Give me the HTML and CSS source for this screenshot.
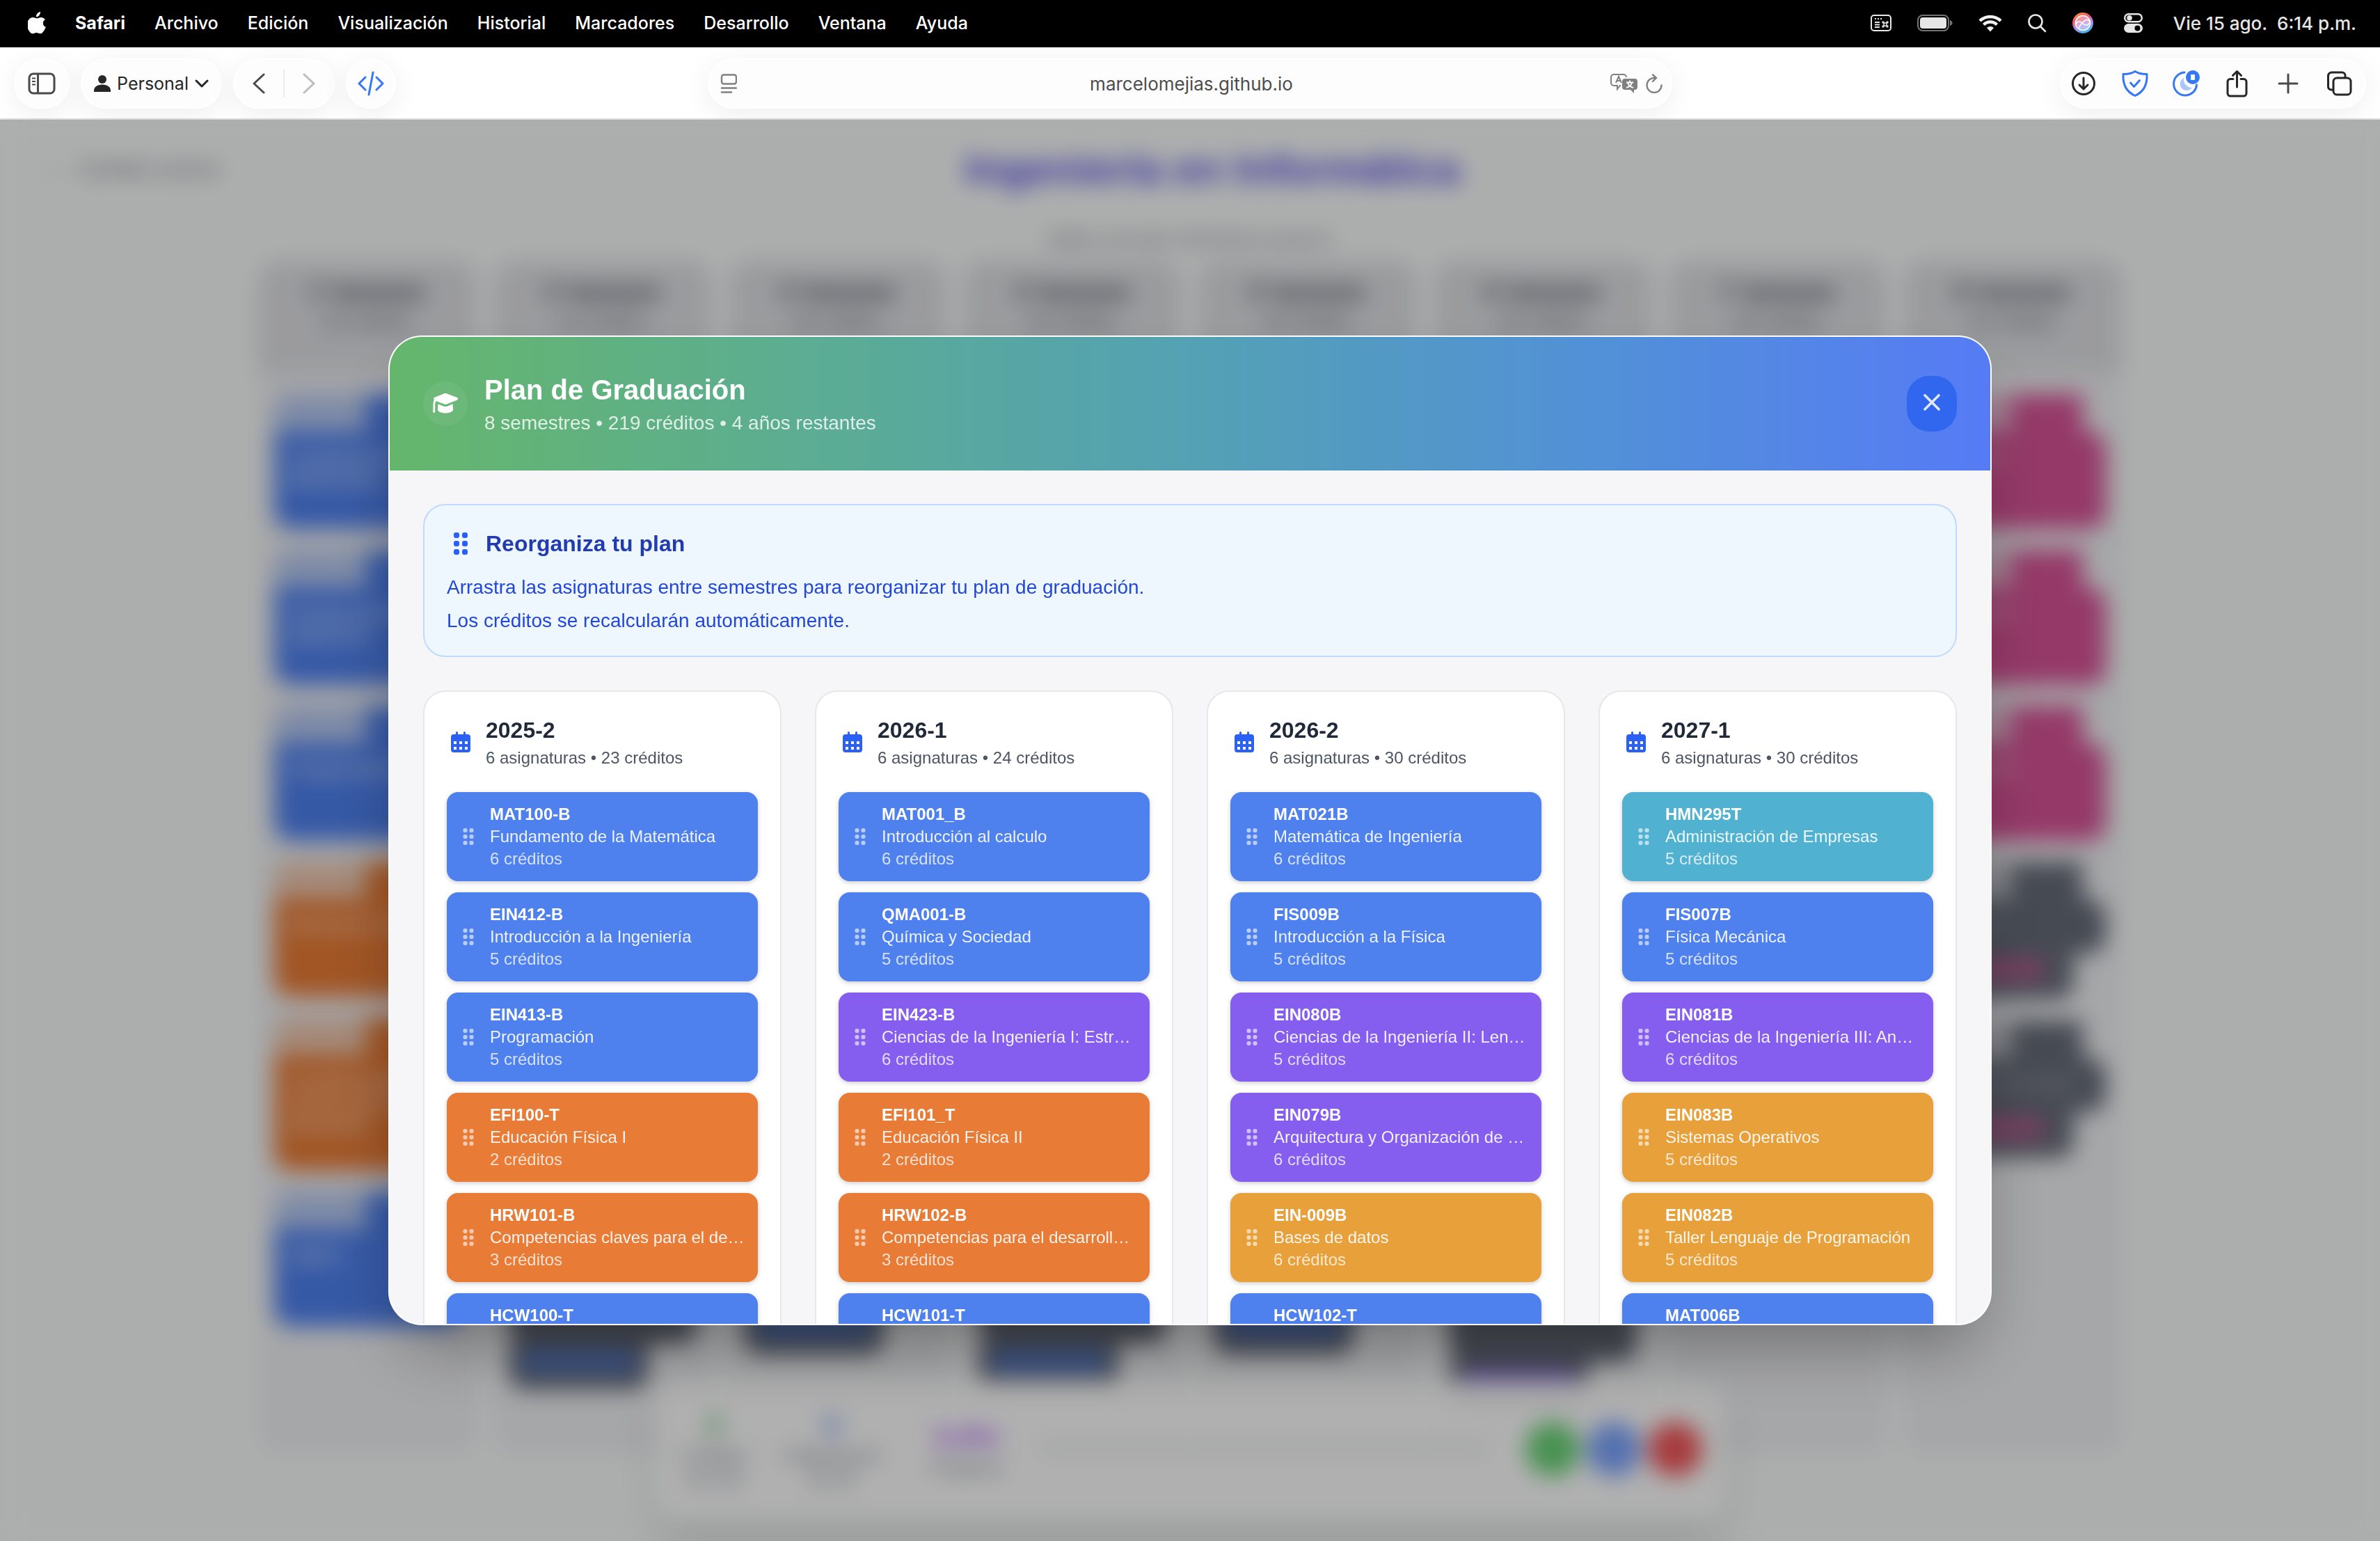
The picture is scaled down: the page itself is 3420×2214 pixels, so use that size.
FILE: index.html
```html
<!DOCTYPE html>
<html lang="es">
<head>
<meta charset="utf-8">
<title>Ingeniería en Informática</title>
<link rel="stylesheet" href="styles.css">
</head>
<body>
<svg class="sprite" aria-hidden="true">
  <symbol id="grip" viewBox="0 0 20 32">
    <rect x="0" y="0" width="8" height="8" rx="3"/><rect x="12" y="0" width="8" height="8" rx="3"/>
    <rect x="0" y="12" width="8" height="8" rx="3"/><rect x="12" y="12" width="8" height="8" rx="3"/>
    <rect x="0" y="24" width="8" height="8" rx="3"/><rect x="12" y="24" width="8" height="8" rx="3"/>
  </symbol>
  <symbol id="calendar" viewBox="0 0 28 30">
    <path fill-rule="evenodd" d="M7 1.500a1.500 1.500 0 0 1 3 0V4h8V1.500a1.500 1.500 0 0 1 3 0V4h3a4 4 0 0 1 4 4v18a4 4 0 0 1-4 4H4a4 4 0 0 1-4-4V8a4 4 0 0 1 4-4h3zM4 14v4h4v-4zm8 0v4h4v-4zm8 0v4h4v-4zM4 22v4h4v-4zm8 0v4h4v-4zm8 0v4h4v-4z"/>
  </symbol>
</svg>

<header class="menubar">
  <nav class="menus">
    <svg class="apple" viewBox="0 0 26 32"><path fill="#fff" d="M18 0c.2 2-.6 3.900-1.700 5.200C15.200 6.500 13.600 7.400 12 7.300c-.2-1.900.7-3.800 1.700-5C14.800 1 16.600.1 18 0zM24.800 11.200c-2 1.200-3 2.900-3 5 0 2.500 1.500 4.700 4 5.600-.6 1.800-1.500 3.500-2.600 5.100-1.500 2.200-3 4.300-5.300 4.300-2.300 0-2.900-1.300-5.500-1.300s-3.400 1.300-5.500 1.400c-2.300.1-4-2.300-5.500-4.400C-1.300 22.700-1.800 15.900.8 12 2.400 9.500 4.900 8.100 7.300 8.100c2.400 0 3.900 1.300 5.900 1.300 1.900 0 3.100-1.300 5.900-1.300 2.200 0 4.300 1.100 5.700 3.100z"/></svg>
    <b>Safari</b><span>Archivo</span><span>Edición</span><span>Visualización</span><span>Historial</span><span>Marcadores</span><span>Desarrollo</span><span>Ventana</span><span>Ayuda</span>
  </nav>
  <div class="status">
    <svg width="30" height="24" viewBox="0 0 30 24" fill="none" stroke="#e6e6e6" stroke-width="2"><rect x="1" y="1" width="28" height="22" rx="4"/><path d="M6 6h2m2 0h2m2 0h2M6 11h7M6 14.500h7M6 18h7"/><path stroke-width="1.500" d="M19 12h4v4h-4zM19 12h-1a1 1 0 1 1 1-1zM23 12v-1a1 1 0 1 1 1 1zM23 16h1a1 1 0 1 1-1 1zM19 16v1a1 1 0 1 1-1-1z"/></svg>
    <svg width="51" height="24" viewBox="0 0 51 24"><rect x="1" y="1" width="44" height="22" rx="7" fill="none" stroke="#737373" stroke-width="2"/><rect x="4" y="4" width="38" height="16" rx="4" fill="#e6e6e6"/><path fill="#737373" d="M47 8c2 .5 3.500 2 3.500 4S49 15.500 47 16z"/></svg>
    <svg width="34" height="26" viewBox="0 0 34 26" fill="none" stroke="#f0f0f0" stroke-width="4.500"><path d="M2 10a21.500 21.500 0 0 1 30 0"/><path d="M7.500 15.500a13.500 13.500 0 0 1 19 0"/><path fill="#f0f0f0" stroke="none" d="M17 25.500l-5-5.500a7 7 0 0 1 10 0z"/></svg>
    <svg width="27" height="28" viewBox="0 0 27 28" fill="none" stroke="#e6e6e6" stroke-width="2.600" stroke-linecap="round"><circle cx="11" cy="12" r="9.500"/><path d="M18 19l7 7"/></svg>
    <svg class="siri" width="30" height="30" viewBox="0 0 30 30"><defs><linearGradient id="siri" x1=".2" y1="0" x2=".6" y2="1"><stop offset="0" stop-color="#f7893b"/><stop offset=".35" stop-color="#ee5a78"/><stop offset=".6" stop-color="#b58be8"/><stop offset="1" stop-color="#38b9f2"/></linearGradient></defs><circle cx="15" cy="15" r="15" fill="url(#siri)"/><circle cx="15" cy="15" r="10" fill="#fff" fill-opacity=".35"/><g fill="none" stroke="#fff" stroke-width="1.600"><circle cx="15" cy="15" r="10.500"/><path d="M5 17c2-5 6-5 9.500-1.500S22 20 25 14M10 22c0-4 3-6 6-9s6-3 8-1"/></g></svg>
    <svg width="27" height="28" viewBox="0 0 27 28"><rect x="1.200" y="1.200" width="24.600" height="11" rx="5.500" fill="none" stroke="#e6e6e6" stroke-width="2.400"/><circle cx="8" cy="6.700" r="3.800" fill="#e6e6e6"/><rect x="0" y="15" width="27" height="13" rx="6.500" fill="#e6e6e6"/><circle cx="19.500" cy="21.500" r="4" fill="#000"/></svg>
    <time class="clock">Vie 15 ago.&nbsp; 6:14 p.m.</time>
  </div>
</header>

<div class="toolbar">
  <div class="tools">
    <button class="pill pill--side" aria-label="Barra lateral"><svg width="40" height="32" viewBox="0 0 40 32" fill="none" stroke="#4a4a4a" stroke-width="3"><rect x="2" y="2" width="36" height="28" rx="6"/><path d="M14.500 2v28"/><path stroke-width="2" d="M6 8.500h5M6 13h5M6 17.500h5"/></svg></button>
    <button class="pill pill--profile"><svg width="24" height="24" viewBox="0 0 24 24" fill="#262626"><circle cx="12" cy="6" r="6"/><path d="M0 24v-2c0-5 5-8.500 12-8.500S24 17 24 22v2z"/></svg>Personal<svg width="20" height="12" viewBox="0 0 20 12" fill="none" stroke="#262626" stroke-width="3" stroke-linecap="round" stroke-linejoin="round"><path d="M2 2l8 8 8-8"/></svg></button>
    <div class="pill pill--nav">
      <button aria-label="Atrás"><svg width="18" height="30" viewBox="0 0 18 30" fill="none" stroke="#4a4a4a" stroke-width="3" stroke-linecap="round" stroke-linejoin="round"><path d="M16 2L2 15l14 13"/></svg></button>
      <button aria-label="Adelante"><svg width="18" height="30" viewBox="0 0 18 30" fill="none" stroke="#bcbcbc" stroke-width="3" stroke-linecap="round" stroke-linejoin="round"><path d="M2 2l14 13L2 28"/></svg></button>
    </div>
    <button class="pill pill--code" aria-label="Inspector"><svg width="38" height="36" viewBox="0 0 38 36" fill="none" stroke="#3478f6" stroke-width="3" stroke-linecap="round" stroke-linejoin="round"><path d="M11 9L2 18l9 9M27 9l9 9-9 9M22 2l-6 32"/></svg></button>
  </div>
  <div class="pill address">
    <svg width="24" height="28" viewBox="0 0 24 28" fill="none" stroke="#808080" stroke-width="2.400" stroke-linecap="round"><rect x="2" y="1.500" width="21" height="13" rx="3"/><path d="M2 20.500h21M2 26.500h14"/></svg>
    <input class="url" type="text" aria-label="Dirección" value="marcelomejias.github.io">
    <div class="address-end">
      <svg width="40" height="28" viewBox="0 0 40 28" fill="none" stroke="#808080" stroke-width="2"><path d="M15 17h-1l-4 5v-5H5a4 4 0 0 1-4-4V5a4 4 0 0 1 4-4h14a4 4 0 0 1 4 4"/><path d="M8 13l4-9 4 9M9.500 10h5"/><path fill="#808080" stroke="none" d="M21 7h14a4 4 0 0 1 4 4v8a4 4 0 0 1-4 4h-1v5l-5-5h-8a4 4 0 0 1-4-4v-8a4 4 0 0 1 4-4z"/><path stroke="#fff" stroke-width="1.800" d="M28 9.500v3M23 12.500h10M25 12.500c1 4 4 6.500 8 7.500M31 12.500c-1 4-4 6.500-8 7.500"/></svg>
      <svg width="24" height="28" viewBox="0 0 24 28" fill="none" stroke="#808080" stroke-width="2.400" stroke-linecap="round" stroke-linejoin="round"><path d="M13 6a10.500 10.500 0 1 0 9.500 10.500M10 1.500L15 6l-5 5"/></svg>
    </div>
  </div>
  <div class="pill actions">
    <button aria-label="Descargas"><svg viewBox="0 0 40 40" fill="none" stroke="#262626" stroke-width="3" stroke-linecap="round" stroke-linejoin="round"><circle cx="20" cy="20" r="15.500"/><path d="M20 12v15.500M14 22l6 6 6-6"/></svg></button>
    <button aria-label="Bloqueador"><svg viewBox="0 0 40 40" fill="none" stroke="#3478f6" stroke-width="3" stroke-linecap="round" stroke-linejoin="round"><path d="M20 2.500c5 3.200 11 4.200 17 4 .8 14-3.500 25-17 31C6.500 31.500 2.200 20.500 3 6.500c6 .2 12-.8 17-4z"/><path d="M13.500 19l5 5.500 8-9"/></svg></button>
    <button aria-label="Modo oscuro"><svg viewBox="0 0 40 40" fill="none"><path stroke="#3478f6" stroke-width="3" stroke-linecap="round" d="M18 4A16.500 16.500 0 1 0 35.500 22"/><path fill="#a9c7fb" d="M17 12a9.500 9.500 0 1 0 12 14 12 12 0 0 1-12-14z"/><circle cx="30" cy="11" r="10" fill="#3478f6"/><rect x="27" y="7" width="6" height="8" rx="1" fill="#fff"/></svg></button>
    <button aria-label="Compartir"><svg viewBox="0 0 40 40" fill="none" stroke="#262626" stroke-width="3" stroke-linecap="round" stroke-linejoin="round"><path d="M14 13.500H10a4 4 0 0 0-4 4V34a4 4 0 0 0 4 4h19a4 4 0 0 0 4-4V17.500a4 4 0 0 0-4-4h-4M19.500 25V3M13.500 8.500l6-6 6 6"/></svg></button>
    <button aria-label="Nueva pestaña"><svg viewBox="0 0 40 40" fill="none" stroke="#4a4a4a" stroke-width="3" stroke-linecap="round"><path d="M20 7v26M7 20h26"/></svg></button>
    <button aria-label="Pestañas"><svg viewBox="0 0 40 40" fill="none" stroke="#262626" stroke-width="3"><rect x="11" y="12" width="25" height="24" rx="5"/><path d="M11 29H8a4.500 4.500 0 0 1-4.500-4.500V9A5 5 0 0 1 8.500 4h15A4.500 4.500 0 0 1 28 8.500V12"/></svg></button>
  </div>
</div>

<div class="viewport">
  <main class="page">
    <div class="page-head">
      <a class="back" href="#"><span>←</span>Cambiar carrera</a>
      <h1>Ingeniería en Informática</h1>
    </div>
    <p class="hint">Malla curricular interactiva avances</p>
    <div class="malla">
      <section class="col"><header><h2>1° Semestre</h2><p>25 créditos</p></header>
        <article class="mat blue"><div class="tag"><b></b><i></i></div><p>Fundamento de la Matemática</p></article>
        <article class="mat blue"><div class="tag"><b></b><i></i></div><p>Introducción a la Ingeniería</p></article>
        <article class="mat blue"><div class="tag"><b></b><i></i></div><p>Programación</p></article>
        <article class="mat orange"><div class="tag"><b></b><i></i></div><p>Educación Física I</p></article>
        <article class="mat orange mat--tall"><div class="tag"><b></b><i></i></div><p>Competencias claves para el desarrollo</p></article>
        <article class="mat blue"><div class="tag"><b></b><i></i></div><p>Inglés I</p></article>
      </section>
      <section class="col"><header><h2>2° Semestre</h2><p>24 créditos</p></header>
        <article class="mat lock"><div class="tag"><b></b><i></i></div><p></p></article>
        <article class="mat blue"><div class="tag"><b></b><i></i></div><p></p></article>
        <article class="mat lock"><div class="tag"><b></b><i></i></div><p></p></article>
        <article class="mat lock"><div class="tag"><b></b><i></i></div><p></p></article>
        <article class="mat lock"><div class="tag"><b></b><i></i></div><p></p></article>
        <article class="mat lock mat--deep"><div class="tag"><b></b><i></i></div><p></p><footer><span class="blue"></span></footer></article>
      </section>
      <section class="col"><header><h2>3° Semestre</h2><p>30 créditos</p></header>
        <article class="mat lock"><div class="tag"><b></b><i></i></div><p></p></article>
        <article class="mat lock"><div class="tag"><b></b><i></i></div><p></p></article>
        <article class="mat lock"><div class="tag"><b></b><i></i></div><p></p></article>
        <article class="mat lock"><div class="tag"><b></b><i></i></div><p></p></article>
        <article class="mat lock"><div class="tag"><b></b><i></i></div><p></p></article>
        <article class="mat lock"><div class="tag"><b></b><i></i></div><p></p><footer><span class="blue"></span></footer></article>
      </section>
      <section class="col"><header><h2>4° Semestre</h2><p>30 créditos</p></header>
        <article class="mat lock"><div class="tag"><b></b><i></i></div><p></p></article>
        <article class="mat lock"><div class="tag"><b></b><i></i></div><p></p></article>
        <article class="mat lock"><div class="tag"><b></b><i></i></div><p></p></article>
        <article class="mat lock"><div class="tag"><b></b><i></i></div><p></p></article>
        <article class="mat lock"><div class="tag"><b></b><i></i></div><p></p></article>
        <article class="mat lock mat--deep"><div class="tag"><b></b><i></i></div><p></p><footer><span class="blue"></span></footer></article>
      </section>
      <section class="col"><header><h2>5° Semestre</h2><p>30 créditos</p></header>
        <article class="mat lock"><div class="tag"><b></b><i></i></div><p></p></article>
        <article class="mat lock"><div class="tag"><b></b><i></i></div><p></p></article>
        <article class="mat lock"><div class="tag"><b></b><i></i></div><p></p></article>
        <article class="mat lock"><div class="tag"><b></b><i></i></div><p></p></article>
        <article class="mat lock"><div class="tag"><b></b><i></i></div><p></p></article>
        <article class="mat lock"><div class="tag"><b></b><i></i></div><p></p><footer><span class="blue"></span></footer></article>
      </section>
      <section class="col"><header><h2>6° Semestre</h2><p>30 créditos</p></header>
        <article class="mat lock"><div class="tag"><b></b><i></i></div><p></p></article>
        <article class="mat lock"><div class="tag"><b></b><i></i></div><p></p></article>
        <article class="mat lock"><div class="tag"><b></b><i></i></div><p></p></article>
        <article class="mat lock"><div class="tag"><b></b><i></i></div><p></p></article>
        <article class="mat lock mat--tall"><div class="tag"><b></b><i></i></div><p></p></article>
        <article class="mat lock mat--deep"><div class="tag"><b></b><i></i></div><p></p><footer><span class="purple"></span></footer></article>
      </section>
      <section class="col"><header><h2>7° Semestre</h2><p>30 créditos</p></header>
        <article class="mat pink"><div class="tag"><b></b><i></i></div><p></p></article>
        <article class="mat pink"><div class="tag"><b></b><i></i></div><p></p></article>
        <article class="mat lock"><div class="tag"><b></b><i></i></div><p></p></article>
        <article class="mat lock"><div class="tag"><b></b><i></i></div><p></p></article>
      </section>
      <section class="col"><header><h2>8° Semestre</h2><p>30 créditos</p></header>
        <article class="mat pink"><div class="tag"><b></b><i></i></div><p>Electivo I</p></article>
        <article class="mat pink"><div class="tag"><b></b><i></i></div><p>Electivo II</p></article>
        <article class="mat pink"><div class="tag"><b></b><i></i></div><p>Electivo III</p></article>
        <article class="mat lock mat--short"><div class="tag"><b></b><i></i></div><p>Proyecto</p><footer><span class="pink"></span></footer></article>
        <article class="mat lock mat--short"><div class="tag"><b></b><i></i></div><p>Proyecto de título</p><footer><span class="pink"></span></footer></article>
      </section>
    </div>
    <aside class="dock">
      <div class="stat green"><b>0</b><span>Créditos</span><span>de 219</span></div>
      <div class="stat indigo"><b>0</b><span>Asignaturas</span><span>de 48</span></div>
      <div class="stat violet"><b>0.0%</b><span>Progreso</span></div>
      <div class="track"></div>
      <div class="dots"><i></i><i></i><i></i></div>
    </aside>
  </main>

  <div class="overlay">
    <section class="modal" role="dialog" aria-labelledby="plan-title">
      <header class="modal-head">
        <span class="cap"><svg width="36" height="30" viewBox="0 0 36 30" fill="#fff"><path d="M18 0c.7 0 1.300.1 2 .4l14.500 5.700c2 .8 2 3 0 3.800L20 15.600c-1.300.5-2.700.5-4 0L5 11.200c-1.200 1-1.800 2.500-1.800 4.300V26c0 1-.3 2-1.600 2S0 27.300.2 26L.6 14c.1-2 .7-3.400 1.500-4.400C.9 8.600 1 6.900 2.400 6.100L16 .4c.7-.3 1.300-.4 2-.4z"/><path d="M7.500 15.500l7.300 3c2 .8 4.400.8 6.400 0l7.300-3 .7 8.500c-1.500 3-6 4.500-11.200 4.500S8.300 27 6.800 24z"/></svg></span>
        <div class="modal-title"><h2 id="plan-title">Plan de Graduación</h2><p>8 semestres • 219 créditos • 4 años restantes</p></div>
        <button class="close" aria-label="Cerrar"><svg width="24" height="24" viewBox="0 0 24 24" stroke="#fff" stroke-opacity=".85" stroke-width="3.600" stroke-linecap="round"><path d="M2 2l20 20M22 2L2 22"/></svg></button>
      </header>
      <div class="modal-body">
        <div class="info">
          <h3><svg class="icon"><use href="#grip"/></svg>Reorganiza tu plan</h3>
          <p>Arrastra las asignaturas entre semestres para reorganizar tu plan de graduación.<br>Los créditos se recalcularán automáticamente.</p>
        </div>
        <div class="semesters">
          <section class="semester">
            <header><svg class="icon"><use href="#calendar"/></svg><div><h3>2025-2</h3><p>6 asignaturas • 23 créditos</p></div></header>
            <ul>
              <li class="course blue"><svg><use href="#grip"/></svg><div><b>MAT100-B</b><span>Fundamento de la Matemática</span><small>6 créditos</small></div></li>
              <li class="course blue"><svg><use href="#grip"/></svg><div><b>EIN412-B</b><span>Introducción a la Ingeniería</span><small>5 créditos</small></div></li>
              <li class="course blue"><svg><use href="#grip"/></svg><div><b>EIN413-B</b><span>Programación</span><small>5 créditos</small></div></li>
              <li class="course orange"><svg><use href="#grip"/></svg><div><b>EFI100-T</b><span>Educación Física I</span><small>2 créditos</small></div></li>
              <li class="course orange"><svg><use href="#grip"/></svg><div><b>HRW101-B</b><span>Competencias claves para el desarrollo</span><small>3 créditos</small></div></li>
              <li class="course blue"><svg><use href="#grip"/></svg><div><b>HCW100-T</b><span>Inglés I</span><small>2 créditos</small></div></li>
            </ul>
          </section>
          <section class="semester">
            <header><svg class="icon"><use href="#calendar"/></svg><div><h3>2026-1</h3><p>6 asignaturas • 24 créditos</p></div></header>
            <ul>
              <li class="course blue"><svg><use href="#grip"/></svg><div><b>MAT001_B</b><span>Introducción al calculo</span><small>6 créditos</small></div></li>
              <li class="course blue"><svg><use href="#grip"/></svg><div><b>QMA001-B</b><span>Química y Sociedad</span><small>5 créditos</small></div></li>
              <li class="course purple"><svg><use href="#grip"/></svg><div><b>EIN423-B</b><span>Ciencias de la Ingeniería I: Estructuras de Datos</span><small>6 créditos</small></div></li>
              <li class="course orange"><svg><use href="#grip"/></svg><div><b>EFI101_T</b><span>Educación Física II</span><small>2 créditos</small></div></li>
              <li class="course orange"><svg><use href="#grip"/></svg><div><b>HRW102-B</b><span>Competencias para el desarrollo profesional</span><small>3 créditos</small></div></li>
              <li class="course blue"><svg><use href="#grip"/></svg><div><b>HCW101-T</b><span>Inglés II</span><small>2 créditos</small></div></li>
            </ul>
          </section>
          <section class="semester">
            <header><svg class="icon"><use href="#calendar"/></svg><div><h3>2026-2</h3><p>6 asignaturas • 30 créditos</p></div></header>
            <ul>
              <li class="course blue"><svg><use href="#grip"/></svg><div><b>MAT021B</b><span>Matemática de Ingeniería</span><small>6 créditos</small></div></li>
              <li class="course blue"><svg><use href="#grip"/></svg><div><b>FIS009B</b><span>Introducción a la Física</span><small>5 créditos</small></div></li>
              <li class="course purple"><svg><use href="#grip"/></svg><div><b>EIN080B</b><span>Ciencias de la Ingeniería II: Lenguajes</span><small>5 créditos</small></div></li>
              <li class="course purple"><svg><use href="#grip"/></svg><div><b>EIN079B</b><span>Arquitectura y Organización de Computadores</span><small>6 créditos</small></div></li>
              <li class="course amber"><svg><use href="#grip"/></svg><div><b>EIN-009B</b><span>Bases de datos</span><small>6 créditos</small></div></li>
              <li class="course blue"><svg><use href="#grip"/></svg><div><b>HCW102-T</b><span>Inglés III</span><small>2 créditos</small></div></li>
            </ul>
          </section>
          <section class="semester">
            <header><svg class="icon"><use href="#calendar"/></svg><div><h3>2027-1</h3><p>6 asignaturas • 30 créditos</p></div></header>
            <ul>
              <li class="course teal"><svg><use href="#grip"/></svg><div><b>HMN295T</b><span>Administración de Empresas</span><small>5 créditos</small></div></li>
              <li class="course blue"><svg><use href="#grip"/></svg><div><b>FIS007B</b><span>Física Mecánica</span><small>5 créditos</small></div></li>
              <li class="course purple"><svg><use href="#grip"/></svg><div><b>EIN081B</b><span>Ciencias de la Ingeniería III: Análisis</span><small>6 créditos</small></div></li>
              <li class="course amber"><svg><use href="#grip"/></svg><div><b>EIN083B</b><span>Sistemas Operativos</span><small>5 créditos</small></div></li>
              <li class="course amber"><svg><use href="#grip"/></svg><div><b>EIN082B</b><span>Taller Lenguaje de Programación</span><small>5 créditos</small></div></li>
              <li class="course blue"><svg><use href="#grip"/></svg><div><b>MAT006B</b><span>Estadística</span><small>4 créditos</small></div></li>
            </ul>
          </section>
        </div>
      </div>
    </section>
  </div>
</div>
</body>
</html>
```
FILE: styles.css
```css
* { box-sizing: border-box; }

html, body { height: 100%; }

body {
  margin: 0;
  display: flex;
  flex-direction: column;
  overflow: hidden;
  background: #fff;
  font-family: "Liberation Sans", Arial, sans-serif;
  font-size: 24px;
}

h1, h2, h3, p, ul { margin: 0; padding: 0; }
ul { list-style: none; }
svg { display: block; flex: none; }
button { border: 0; padding: 0; background: none; font: inherit; color: inherit; }
.sprite { display: none; }

.blue { background: #4e80ee; }
.orange { background: #e87b35; }
.purple { background: #855eef; }
.amber { background: #e7a03a; }
.teal { background: #51b1d0; }
.pink { background: #d65396; }

/* System menu bar */
.menubar {
  flex: none;
  height: 68px;
  padding: 0 34px 2px 40px;
  display: flex;
  align-items: center;
  justify-content: space-between;
  background: #000;
  color: #fff;
  font-family: Inter, sans-serif;
  font-size: 25px;
  font-weight: 500;
}
.menus { display: flex; align-items: center; gap: 42px; }
.menus b { font-weight: 700; }
.apple { width: 26px; height: 32px; }
.status { display: flex; align-items: center; gap: 37px; }
.siri { margin-right: 7px; }
.clock { margin-left: 7px; color: #e6e6e6; font-size: 26px; white-space: nowrap; }

/* Browser toolbar */
.toolbar {
  flex: none;
  height: 104px;
  padding: 2px 20px 0;
  display: grid;
  grid-template-columns: 1fr minmax(0, 1386px) 1fr;
  align-items: center;
  background: #fff;
  border-bottom: 2px solid #dcdedd;
  font-family: Inter, sans-serif;
  font-size: 26px;
}
.pill {
  height: 72px;
  display: flex;
  align-items: center;
  justify-content: center;
  border: 2px solid #fff;
  border-radius: 36px;
  background: #fdfdfd;
  box-shadow: 0 8px 40px rgba(0, 0, 0, .07);
}
.tools { display: flex; gap: 16px; }
.pill--side { width: 80px; }
.pill--profile { width: 203px; gap: 9px; color: #262626; font-size: 25px; }
.pill--nav { width: 146px; }
.pill--nav button { flex: 1; height: 40px; display: flex; align-items: center; justify-content: center; }
.pill--nav button + button { border-left: 2px solid #ececec; }
.pill--code { width: 72px; }
.address { display: grid; grid-template-columns: 1fr auto 1fr; padding: 0 12px 0 16px; }
.url {
  width: 400px;
  border: 0;
  padding: 0;
  background: none;
  color: #4d4d4d;
  font: inherit;
  text-align: center;
}
.address-end { justify-self: end; display: flex; gap: 11px; }
.actions { justify-self: end; width: 440px; padding: 0 16px 0 12px; justify-content: space-between; }
.actions svg { width: 40px; height: 40px; }

/* Curriculum page behind the dialog */
.viewport { position: relative; flex: 1; min-height: 0; overflow: hidden; }
.page {
  position: relative;
  height: 100%;
  padding: 31px 0 124px;
  display: flex;
  flex-direction: column;
  background: #f7faf9;
}
.page-head { flex: none; height: 80px; padding: 0 60px; display: grid; grid-template-columns: 350px 1fr 286px; align-items: center; }
.back { display: flex; gap: 24px; color: #5f6673; font-size: 28px; text-decoration: none; white-space: nowrap; }
.page-head h1 { text-align: center; font-size: 60px; line-height: 80px; color: #5046e5; }
.hint { flex: none; margin: 40px 0 11px; text-align: center; font-size: 26px; line-height: 40px; color: #6b707c; }
.malla {
  flex: 1;
  min-height: 0;
  width: 2680px;
  max-width: 100%;
  margin: 0 auto;
  display: grid;
  grid-template-columns: repeat(8, 1fr);
  gap: 22px;
}
.col { display: flex; flex-direction: column; gap: 30px; border-radius: 32px; background: #eeeff2; min-height: 0; }
.col > header { flex: none; height: 162px; padding-top: 24px; border-radius: 32px 32px 0 0; background: #dedfe3; text-align: center; }
.col h2 { font-size: 29px; line-height: 44px; color: #1f2937; }
.col header p { font-size: 26px; line-height: 40px; color: #4b5563; }
.mat { flex: none; margin: 0 24px; background: none; }
.mat.blue, .mat.orange, .mat.pink { background: none; }
.tag { display: flex; height: 54px; }
.tag b { width: 133px; border-radius: 24px 0 0 0; opacity: .35; }
.tag i { width: 102px; }
.mat p { height: 140px; padding: 20px; border-radius: 0 24px 24px 24px; color: #fff; font-size: 26px; line-height: 32px; }
.mat footer { width: 200px; height: 66px; padding: 10px 16px; border-radius: 0 0 24px 24px; }
.mat footer span { display: block; height: 30px; border-radius: 15px; opacity: .7; }
.mat.blue .tag *, .mat.blue p { background: #4e80ee; }
.mat.orange .tag *, .mat.orange p { background: #e87b35; }
.mat.pink .tag *, .mat.pink p { background: #d65396; }
.mat.lock .tag *, .mat.lock p, .mat.lock footer { background: #656b78; }
.mat--tall p { height: 166px; }
.mat--deep p { height: 190px; }
.mat--short p { height: 78px; color: #b4b8c0; }
.mat--short footer { width: 222px; padding: 8px 40px 8px 16px; }

.dock {
  position: absolute;
  left: 50%;
  bottom: 32px;
  width: 1536px;
  height: 200px;
  transform: translateX(-50%);
  padding: 0 32px 0 36px;
  display: flex;
  align-items: center;
  gap: 52px;
  border-radius: 32px;
  background: rgba(253, 253, 253, .93);
  box-shadow: 0 40px 60px rgba(0, 0, 0, .1);
}
.stat { display: flex; flex-direction: column; align-items: center; color: #6b7280; font-size: 26px; line-height: 34px; background: none; }
.stat b { font-size: 40px; line-height: 52px; }
.green b { color: #4fb35c; }
.indigo b { color: #4e80ee; }
.violet { margin-left: 20px; }
.violet b { color: #a855f7; }
.track { flex: 1; height: 14px; border-radius: 7px; background: #e5e7eb; }
.dots { display: flex; gap: 10px; }
.dots i { width: 78px; height: 78px; border-radius: 50%; background: #68d175; }
.dots i + i { background: #7aa2fb; }
.dots i + i + i { background: #ef5559; }

/* Graduation plan dialog */
.overlay {
  position: absolute;
  inset: 0;
  padding: 310px 32px;
  display: flex;
  align-items: center;
  justify-content: center;
  background: rgba(0, 0, 0, .3);
  backdrop-filter: blur(16px);
}
.modal {
  width: 100%;
  max-width: 2304px;
  max-height: 100%;
  display: flex;
  flex-direction: column;
  overflow: hidden;
  border: 2px solid rgba(255, 255, 255, .9);
  border-radius: 48px;
  background: #f6f6f8;
  box-shadow: 0 50px 100px -24px rgba(0, 0, 0, .35);
}
.modal-head {
  flex: none;
  padding: 48px;
  display: flex;
  align-items: center;
  gap: 24px;
  background: linear-gradient(to right, #65b66c 0%, #5cad91 25%, #54a1b4 50%, #5290d8 76%, #567bf5 100%);
  color: #fff;
}
.cap { width: 64px; height: 64px; display: flex; align-items: center; justify-content: center; border-radius: 50%; background: rgba(255, 255, 255, .06); }
.modal-title { flex: 1; }
.modal-title h2 { font-size: 40px; line-height: 56px; }
.modal-title p { font-size: 28px; line-height: 40px; color: rgba(255, 255, 255, .8); }
.close { width: 72px; height: 80px; padding-bottom: 4px; display: flex; align-items: center; justify-content: center; border-radius: 32px; background: #3166ee; }

.modal-body { min-height: 0; padding: 48px; overflow-y: auto; scrollbar-width: none; }
.icon { width: 40px; height: 30px; }
.info { padding: 28px 32px 26px; border: 2px solid #c0dafd; border-radius: 32px; background: #eef6fe; color: #2347d9; font-size: 28px; line-height: 48px; }
.info h3 { margin-bottom: 12px; display: flex; align-items: center; gap: 16px; font-size: 32px; line-height: 54px; color: #223bb0; }
.info .icon { height: 32px; fill: #2b60f5; }

.semesters { margin-top: 48px; display: grid; grid-template-columns: repeat(4, minmax(0, 1fr)); gap: 48px; }
.semester { padding: 32px; border: 2px solid #e6e7eb; border-radius: 32px; background: #fff; }
.semester header { margin-bottom: 32px; display: flex; align-items: center; gap: 16px; }
.semester .icon { fill: #2b60f5; }
.semester h3 { font-size: 32px; line-height: 46px; color: #1f2937; }
.semester header p { font-size: 24px; line-height: 34px; color: #4b5563; }
.semester ul { display: flex; flex-direction: column; gap: 16px; }
.course { padding: 16px; display: flex; align-items: center; gap: 16px; border-radius: 16px; color: #fff; line-height: 32px; box-shadow: 0 2px 6px rgba(0, 0, 0, .2); }
.course svg { width: 30px; height: 24px; fill: rgba(255, 255, 255, .6); }
.course div { flex: 1; min-width: 0; display: flex; flex-direction: column; }
.course span { overflow: hidden; text-overflow: ellipsis; white-space: nowrap; color: rgba(255, 255, 255, .9); }
.course small { font-size: 24px; color: rgba(255, 255, 255, .77); }
```
